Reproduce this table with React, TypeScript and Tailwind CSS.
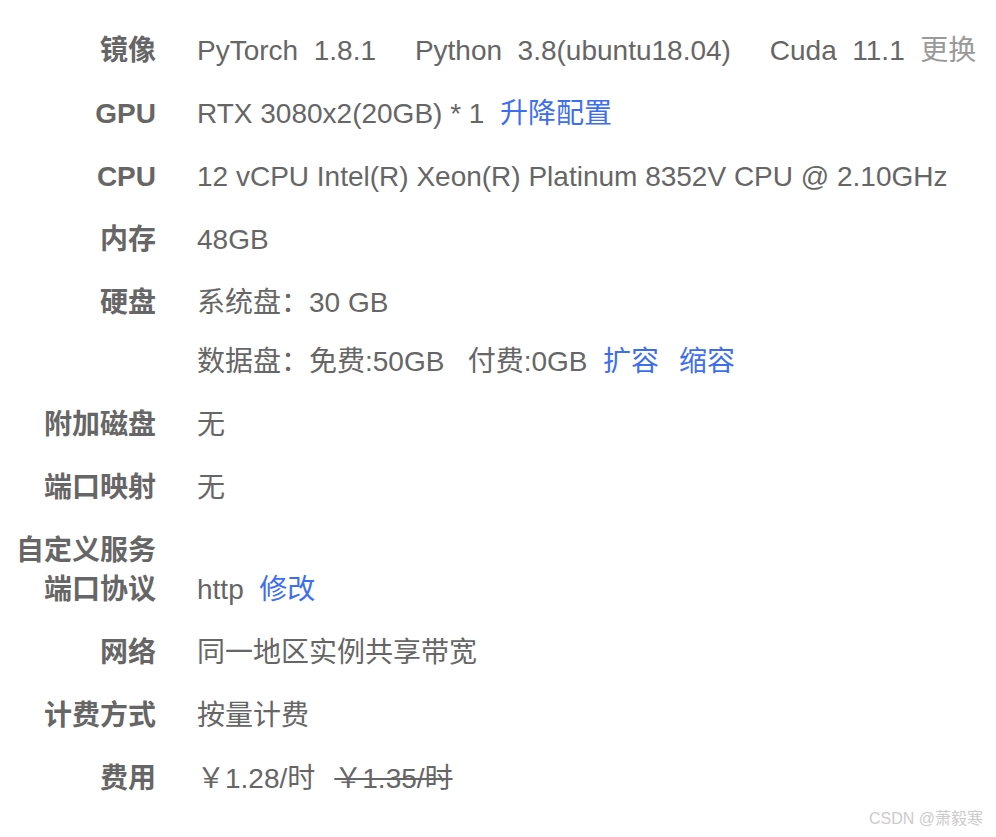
import React from "react";

const font = { fontFamily: '"Liberation Sans", Arial, "Noto Sans CJK SC", sans-serif' };

function Row({ label, children, end }: { label: React.ReactNode; children: React.ReactNode; end?: boolean }) {
  return (
    <div className={`flex ${end ? "items-end" : "items-start"}`}>
      <div className="w-[140px] shrink-0 text-right font-bold text-[#666666]">{label}</div>
      <div className="ml-[41px] text-[#666666] whitespace-pre">{children}</div>
    </div>
  );
}

const Link = ({ children }: { children: React.ReactNode }) => (
  <span className="text-[#3d6ef0]">{children}</span>
);

export default function App() {
  return (
    <div
      className="relative w-[996px] h-[837px] bg-white text-[28px] leading-[39px] overflow-hidden"
      style={font}
    >
      <div className="pt-[31px] pl-[16px] flex flex-col gap-[24px]">
        <Row label="镜像">
          {"PyTorch  1.8.1     Python  3.8(ubuntu18.04)     Cuda  11.1  "}
          <span className="text-[#999999]">更换</span>
        </Row>
        <Row label="GPU">
          {"RTX 3080x2(20GB) * 1  "}
          <Link>升降配置</Link>
        </Row>
        <Row label="CPU">12 vCPU Intel(R) Xeon(R) Platinum 8352V CPU @ 2.10GHz</Row>
        <Row label="内存">48GB</Row>
        <Row label="硬盘">
          <div className="flex flex-col gap-[20px]">
            <div>系统盘：30 GB</div>
            <div>
              {"数据盘：免费:50GB   付费:0GB  "}
              <Link>扩容</Link>
              <span className="ml-[20px]" />
              <Link>缩容</Link>
            </div>
          </div>
        </Row>
        <Row label="附加磁盘">无</Row>
        <Row label="端口映射">无</Row>
        <Row label={<span className="whitespace-normal break-all">自定义服务端口协议</span>} end>
          {"http  "}
          <Link>修改</Link>
        </Row>
        <Row label="网络">同一地区实例共享带宽</Row>
        <Row label="计费方式">按量计费</Row>
        <Row label="费用">
          <span>￥1.28/时</span>
          <span className="ml-[19px] line-through">￥1.35/时</span>
        </Row>
      </div>
      <div className="absolute right-[13px] bottom-[8px] text-[16px] leading-[20px] text-[#cccccc]">
        CSDN @萧毅寒
      </div>
    </div>
  );
}
